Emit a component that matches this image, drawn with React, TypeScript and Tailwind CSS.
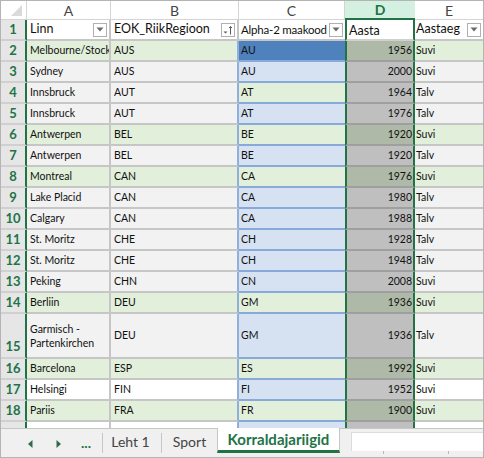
import React from 'react';

type Tone = 'g' | 'x' | 'w';
type CTone = 'g' | 'b' | 'sel';

type Row = {
  n: number;
  a: string;
  b: string;
  c: string;
  d: number;
  e: string;
  t: Tone;
  ct: CTone;
  tall?: boolean;
};

const rows: Row[] = [
  { n: 2, a: 'Melbourne/Stockholm', b: 'AUS', c: 'AU', d: 1956, e: 'Suvi', t: 'g', ct: 'sel' },
  { n: 3, a: 'Sydney', b: 'AUS', c: 'AU', d: 2000, e: 'Suvi', t: 'x', ct: 'b' },
  { n: 4, a: 'Innsbruck', b: 'AUT', c: 'AT', d: 1964, e: 'Talv', t: 'x', ct: 'g' },
  { n: 5, a: 'Innsbruck', b: 'AUT', c: 'AT', d: 1976, e: 'Talv', t: 'x', ct: 'b' },
  { n: 6, a: 'Antwerpen', b: 'BEL', c: 'BE', d: 1920, e: 'Suvi', t: 'g', ct: 'g' },
  { n: 7, a: 'Antwerpen', b: 'BEL', c: 'BE', d: 1920, e: 'Talv', t: 'x', ct: 'b' },
  { n: 8, a: 'Montreal', b: 'CAN', c: 'CA', d: 1976, e: 'Suvi', t: 'g', ct: 'g' },
  { n: 9, a: 'Lake Placid', b: 'CAN', c: 'CA', d: 1980, e: 'Talv', t: 'x', ct: 'b' },
  { n: 10, a: 'Calgary', b: 'CAN', c: 'CA', d: 1988, e: 'Talv', t: 'x', ct: 'b' },
  { n: 11, a: 'St. Moritz', b: 'CHE', c: 'CH', d: 1928, e: 'Talv', t: 'x', ct: 'b' },
  { n: 12, a: 'St. Moritz', b: 'CHE', c: 'CH', d: 1948, e: 'Talv', t: 'x', ct: 'b' },
  { n: 13, a: 'Peking', b: 'CHN', c: 'CN', d: 2008, e: 'Suvi', t: 'x', ct: 'b' },
  { n: 14, a: 'Berliin', b: 'DEU', c: 'GM', d: 1936, e: 'Suvi', t: 'g', ct: 'g' },
  { n: 15, a: 'Garmisch - Partenkirchen', b: 'DEU', c: 'GM', d: 1936, e: 'Talv', t: 'x', ct: 'b', tall: true },
  { n: 16, a: 'Barcelona', b: 'ESP', c: 'ES', d: 1992, e: 'Suvi', t: 'g', ct: 'g' },
  { n: 17, a: 'Helsingi', b: 'FIN', c: 'FI', d: 1952, e: 'Suvi', t: 'w', ct: 'b' },
  { n: 18, a: 'Pariis', b: 'FRA', c: 'FR', d: 1900, e: 'Suvi', t: 'g', ct: 'g' },
];

const bgPlain: Record<Tone, string> = {
  g: 'bg-[#e2efda]',
  x: 'bg-[#f2f2f2]',
  w: 'bg-white',
};

const bgC: Record<CTone, string> = {
  g: 'bg-[#e2efda]',
  b: 'bg-[#d6e2f2]',
  sel: 'bg-[#4f81bd]',
};

const bgD: Record<Tone, string> = {
  g: 'bg-[#aebaa7]',
  x: 'bg-[#bfbfbf]',
  w: 'bg-[#c4c4c4]',
};

const FilterBtn = ({ sort }: { sort?: boolean }) => (
  <span className="w-[14px] h-[14px] shrink-0 border border-[#b0b0b0] bg-white flex items-center justify-center">
    {sort ? (
      <svg width="12" height="12" viewBox="0 0 12 12">
        <path d="M1.5 7.5h4l-2 2z" fill="#5a5a5a" />
        <path d="M8.5 10.5V2.5M7 4l1.5-1.5L10 4" stroke="#5a5a5a" strokeWidth="1" fill="none" />
      </svg>
    ) : (
      <svg width="8" height="5" viewBox="0 0 8 5">
        <path d="M0.5 0.5h7L4 4.5z" fill="#6a6a6a" />
      </svg>
    )}
  </span>
);

const ColHeader = () => (
  <div className="flex h-[19px] text-[14px] text-[#444] bg-white">
    <div className="w-[26px] shrink-0 border-r border-b border-[#d4d4d4] flex items-end justify-end pr-[4px] pb-[3px]">
      <svg width="11" height="11" viewBox="0 0 11 11">
        <path d="M11 0V11H0z" fill="#dadada" />
      </svg>
    </div>
    <div className="w-[84px] shrink-0 border-r border-b border-[#d4d4d4] flex items-center justify-center">A</div>
    <div className="w-[128px] shrink-0 border-r border-b border-[#d4d4d4] flex items-center justify-center">B</div>
    <div className="w-[106px] shrink-0 border-r border-b border-[#d4d4d4] flex items-center justify-center">C</div>
    <div className="w-[70px] shrink-0 bg-[#d3f0e0] border-b-2 border-[#217346] flex items-center justify-center font-bold text-[#217346]">
      D
    </div>
    <div className="w-[68px] shrink-0 border-b border-[#d4d4d4] flex items-center justify-center">E</div>
  </div>
);

const FieldRow = () => (
  <div className="flex h-[21px] text-[12.5px] text-[#111] bg-white">
    <div className="w-[26px] shrink-0 bg-[#e6e6e6] border-b-2 border-b-[#d0d0d0] border-r-2 border-r-[#217346] flex items-center justify-center text-[13px] font-bold text-[#217346]">
      1
    </div>
    <div className="w-[84px] shrink-0 border-b-2 border-r-2 border-[#c6c6c6] flex items-center justify-between pl-[3px] pr-[2px]">
      <span>Linn</span>
      <FilterBtn />
    </div>
    <div className="w-[128px] shrink-0 border-b-2 border-r-2 border-[#c6c6c6] flex items-center justify-between pl-[3px] pr-[2px]">
      <span>EOK_RiikRegioon</span>
      <FilterBtn sort />
    </div>
    <div className="w-[106px] shrink-0 border-b-2 border-[#c6c6c6] flex items-center justify-between pl-[2px] pr-[2px] whitespace-nowrap overflow-hidden">
      <span className="text-[11.5px] tracking-[-0.2px]">Alpha-2 maakood</span>
      <FilterBtn />
    </div>
    <div className="w-[70px] shrink-0 border-x-2 border-x-[#217346] border-b-2 border-b-[#d0d0d0] flex items-center pt-[3px] pl-[2px]">
      <span>Aasta</span>
    </div>
    <div className="w-[68px] shrink-0 border-b-2 border-[#c6c6c6] flex items-center justify-between pl-[1px] pr-[2px] whitespace-nowrap overflow-hidden">
      <span>Aastaeg</span>
      <FilterBtn />
    </div>
  </div>
);

const DataRow = ({ r }: { r: Row }) => (
  <div className={`flex text-[10.5px] ${r.tall ? 'h-[45px]' : 'h-[21px]'}`}>
    <div
      className={`w-[26px] shrink-0 bg-[#e6e6e6] border-b-2 border-b-[#d0d0d0] border-r-2 border-r-[#217346] flex justify-center text-[13px] font-bold text-[#217346] ${
        r.tall ? 'items-end pb-[1px]' : 'items-center'
      }`}
    >
      {r.n}
    </div>
    <div
      className={`w-[84px] shrink-0 border-b-2 border-r-2 border-[#c6c6c6] flex items-center pl-[3px] overflow-hidden text-[#111] ${bgPlain[r.t]} ${
        r.tall ? 'leading-[14px] pr-[2px]' : 'whitespace-nowrap'
      }`}
    >
      {r.a}
    </div>
    <div
      className={`w-[128px] shrink-0 border-b-2 border-[#c6c6c6] border-r-2 border-r-[#8eb0dc] flex items-center pl-[3px] text-[#111] ${bgPlain[r.t]}`}
    >
      {r.b}
    </div>
    <div className={`w-[106px] shrink-0 border-b-2 border-[#88aadb] flex items-center pl-[2px] text-[#111] ${bgC[r.ct]}`}>
      {r.c}
    </div>
    <div
      className={`w-[70px] shrink-0 border-x-2 border-x-[#217346] border-b-2 border-b-[#9f9f9f] flex items-center justify-end pr-[1px] text-[#111] ${bgD[r.t]}`}
    >
      {r.d}
    </div>
    <div className={`w-[68px] shrink-0 border-b-2 border-[#c6c6c6] flex items-center pl-[1px] text-[#111] ${bgPlain[r.t]}`}>
      {r.e}
    </div>
  </div>
);

const TailRow = () => (
  <div className="flex h-[6px]">
    <div className="w-[26px] shrink-0 bg-[#e6e6e6] border-r-2 border-r-[#217346]" />
    <div className="w-[84px] shrink-0 bg-white border-r-2 border-[#c6c6c6]" />
    <div className="w-[128px] shrink-0 bg-white border-r-2 border-r-[#8eb0dc]" />
    <div className="w-[106px] shrink-0 bg-[#d6e2f2]" />
    <div className="w-[70px] shrink-0 bg-[#bfbfbf] border-x-2 border-x-[#217346]" />
    <div className="w-[68px] shrink-0 bg-white" />
  </div>
);

const SheetTabs = () => (
  <div className="flex h-[29px] bg-[#f0f0f0] border-t border-[#c6c6c6] text-[14px] text-[#444]">
    <div className="w-[101px] shrink-0 flex items-center pl-[27px] pt-[1px]">
      <svg width="5" height="8" viewBox="0 0 5 8">
        <path d="M4.5 0v8L0 4z" fill="#2f6b4a" />
      </svg>
      <svg className="ml-[23px]" width="5" height="8" viewBox="0 0 5 8">
        <path d="M0.5 0v8L5 4z" fill="#2f6b4a" />
      </svg>
      <span className="ml-[20px] font-bold text-[#217346] text-[14px] leading-none pb-[2px]">...</span>
    </div>
    <div className="w-px h-[20px] mt-[4px] bg-[#c6c6c6] shrink-0" />
    <div className="w-[58px] shrink-0 h-[25px] flex items-center justify-center pr-[3px]">Leht 1</div>
    <div className="w-px h-[20px] mt-[4px] bg-[#c6c6c6] shrink-0" />
    <div className="w-[55px] shrink-0 h-[25px] flex items-center justify-center">Sport</div>
    <div className="w-[123px] shrink-0 h-[25px] -mt-px bg-white border-x border-[#c6c6c6] border-b-[3px] border-b-[#217346] flex items-center justify-center font-bold text-[15px] text-[#217346]">
      Korraldajariigid
    </div>
    <div className="flex-1 flex flex-col pl-[11px] pt-[3px]">
      <div className="h-[19px] bg-white border-l border-t border-[#dcdcdc]" />
      <div className="flex h-[3px]">
        <div className="ml-[32px] w-px bg-[#b8b8b8]" />
        <div className="ml-[64px] w-px bg-[#b8b8b8]" />
      </div>
    </div>
  </div>
);

export default function App() {
  return (
    <div className="w-[484px] h-[458px] border border-[#b4b4b4] bg-white flex flex-col overflow-hidden font-[Lato,'Liberation_Sans',sans-serif]">
      <div className="h-[427px] overflow-hidden flex flex-col shrink-0">
        <ColHeader />
        <FieldRow />
        {rows.map((r) => (
          <DataRow key={r.n} r={r} />
        ))}
        <TailRow />
      </div>
      <SheetTabs />
    </div>
  );
}
